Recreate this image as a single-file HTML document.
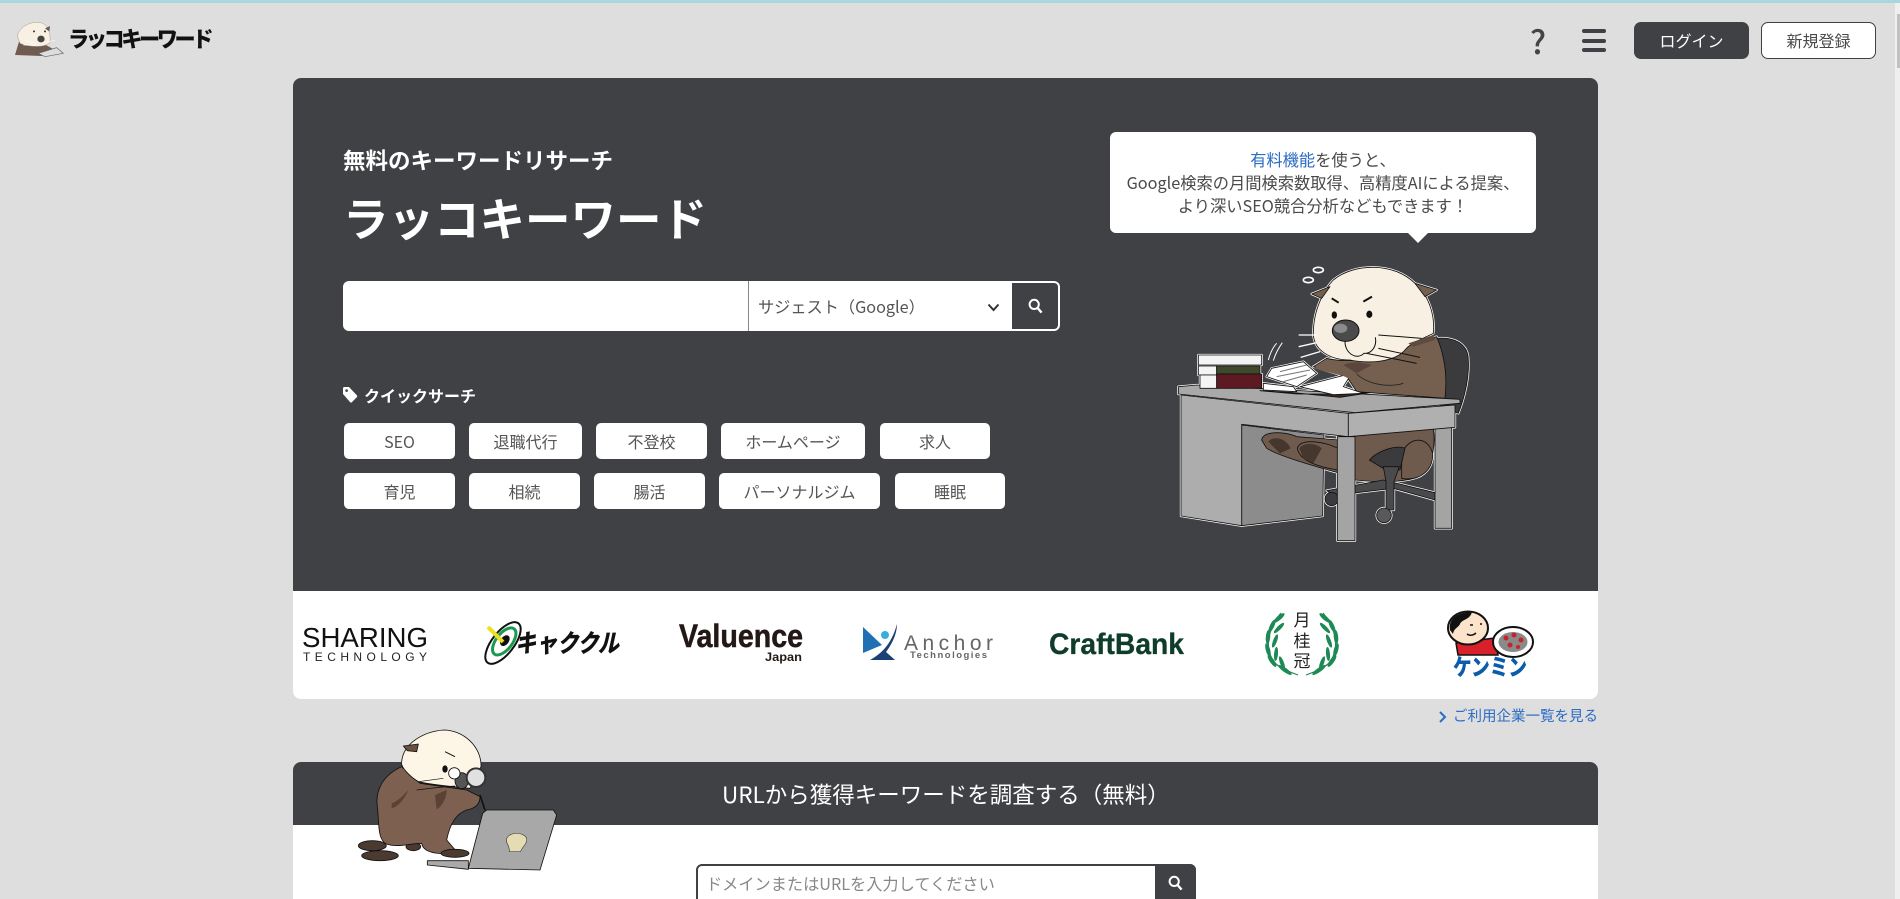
<!DOCTYPE html>
<html lang="ja"><head><meta charset="utf-8"><title>ラッコキーワード</title>
<style>
html,body{margin:0;padding:0;width:1900px;height:899px;overflow:hidden;background:#dedede}
body{position:relative;font-family:"Noto Sans CJK JP","Liberation Sans",sans-serif;color:#4a4a4a}
.a{position:absolute;box-sizing:border-box}
.c{display:flex;align-items:center;justify-content:center;white-space:nowrap}
.n{white-space:nowrap;line-height:1}
.chip{background:#fff;border-radius:5px;height:36px;font-size:16px;color:#555}
svg{position:absolute;overflow:visible}
</style></head><body>
<div class="a" style="left:0;top:0;width:1900px;height:3px;background:#a6d8dd"></div>
<div class="a" style="left:1895px;top:3px;width:5px;height:896px;background:#efefef"></div>
<div class="a" style="left:1897px;top:14px;width:3px;height:54px;background:#c1c1c1"></div>

<!-- header logo -->
<svg style="left:0;top:0" width="300" height="80" viewBox="0 0 900 240">
<path d="M58 122L45 165L125 168L165 150L110 120Z" fill="#6f5b4f"/>
<path d="M52 108C56 85 85 65 115 67C145 70 152 95 150 128C130 145 85 140 60 130Z" fill="#f8f0e3" stroke="#a89a8a" stroke-width="1.5"/>
<path d="M135 85L150 78L148 95Z" fill="#6f5b4f"/>
<ellipse cx="123" cy="117" rx="11" ry="10" fill="#444"/>
<circle cx="102" cy="94" r="3" fill="#333"/><circle cx="135" cy="94" r="3" fill="#333"/>
<path d="M75 122L110 130M140 125L165 122M70 135L105 135" stroke="#fff" stroke-width="2"/>
<path d="M115 160L170 143L190 160L135 170Z" fill="#ddd" stroke="#666" stroke-width="2"/>
</svg>
<div class="a n" style="left:68px;top:27px;font-size:22px;font-weight:900;color:#111;letter-spacing:-3.5px;transform:scaleX(.96);transform-origin:left">ラッコキーワード</div>

<!-- header right -->
<div class="a c" style="left:1526px;top:22px;width:24px;height:36px;font-size:33px;font-weight:500;color:#444">?</div>
<div class="a" style="left:1582px;top:29px;width:24px;height:4px;background:#404145;border-radius:2px"></div>
<div class="a" style="left:1582px;top:39px;width:24px;height:4px;background:#404145;border-radius:2px"></div>
<div class="a" style="left:1582px;top:48px;width:24px;height:4px;background:#404145;border-radius:2px"></div>
<div class="a c" style="left:1634px;top:22px;width:115px;height:37px;padding-bottom:1px;background:#404145;border-radius:7px;color:#fff;font-size:16px">ログイン</div>
<div class="a c" style="left:1761px;top:22px;width:115px;height:37px;padding-bottom:1px;background:#fff;border:1px solid #404145;border-radius:7px;color:#4a4a4a;font-size:16px">新規登録</div>

<!-- hero -->
<div class="a" style="left:293px;top:78px;width:1305px;height:621px;background:#fff;border-radius:8px;overflow:hidden">
<div style="height:513px;background:#404145"></div></div>
<div class="a n" style="left:343px;top:149px;font-size:22.5px;font-weight:700;color:#fff">無料のキーワードリサーチ</div>
<div class="a n" style="left:343px;top:195px;font-size:45.5px;font-weight:700;color:#fff">ラッコキーワード</div>

<div class="a" style="left:343px;top:281px;width:717px;height:50px;background:#fff;border-radius:6px"></div>
<div class="a" style="left:748px;top:281px;width:1px;height:50px;background:#888"></div>
<div class="a n" style="left:758px;top:298px;font-size:16.2px;color:#555">サジェスト（Google）</div>
<svg style="left:987px;top:303px" width="13" height="9" viewBox="0 0 13 9"><path d="M1.5 1.5L6.5 7L11.5 1.5" fill="none" stroke="#333" stroke-width="2"/></svg>
<div class="a" style="left:1012px;top:283px;width:46px;height:46px;background:#404145;border-radius:0 4px 4px 0"></div>
<svg style="left:1028px;top:298px" width="15" height="16" viewBox="0 0 15 16"><circle cx="6.2" cy="6.4" r="4.6" fill="none" stroke="#fff" stroke-width="2"/><path d="M9.6 10L13.6 14.6" stroke="#fff" stroke-width="2.4"/></svg>

<svg style="left:343px;top:387px" width="15" height="16" viewBox="0 0 15 16"><path d="M0 1.5Q0 0 1.5 0H6L14 8.5Q14.6 9.2 14 10L8.8 15.2Q8 16 7.2 15.2L0 7Z" fill="#fff"/><circle cx="3.6" cy="3.6" r="1.3" fill="#404145"/></svg>
<div class="a n" style="left:364px;top:387px;font-size:16px;font-weight:700;color:#fff">クイックサーチ</div>

<div class="a c chip" style="left:344px;top:423px;width:111px">SEO</div>
<div class="a c chip" style="left:469px;top:423px;width:113px">退職代行</div>
<div class="a c chip" style="left:596px;top:423px;width:111px">不登校</div>
<div class="a c chip" style="left:721px;top:423px;width:144px">ホームページ</div>
<div class="a c chip" style="left:880px;top:423px;width:110px">求人</div>
<div class="a c chip" style="left:344px;top:473px;width:111px">育児</div>
<div class="a c chip" style="left:469px;top:473px;width:111px">相続</div>
<div class="a c chip" style="left:594px;top:473px;width:111px">腸活</div>
<div class="a c chip" style="left:719px;top:473px;width:161px">パーソナルジム</div>
<div class="a c chip" style="left:895px;top:473px;width:110px">睡眠</div>

<!-- bubble -->
<div class="a" style="left:1110px;top:132px;width:426px;height:101px;background:#fff;border-radius:6px;text-align:center;font-size:16.25px;line-height:23px;padding-top:16px;color:#4a4a4a;white-space:nowrap"><span style="color:#2b6cc4">有料機能</span>を使うと、<br>Google検索の月間検索数取得、高精度AIによる提案、<br>より深いSEO競合分析などもできます！</div>
<div class="a" style="left:1408px;top:233px;width:0;height:0;border-left:10px solid transparent;border-right:10px solid transparent;border-top:10px solid #fff"></div>

<!-- desk otter -->
<svg style="left:1100px;top:120px" width="460" height="440" viewBox="0 0 1380 1320">
<defs>
<g id="art">
<path d="M1010 655C1060 650 1105 670 1105 720C1108 770 1095 830 1075 880L1020 860Z" fill="#3b3b3d"/>
<path d="M715 950L1000 925C1010 1000 985 1070 930 1078C870 1090 820 1085 765 1080L715 1050Z" fill="#6f5a4e"/>
<path d="M905 1000C930 945 985 950 998 1000C1000 1050 960 1085 905 1075Z" fill="#6f5a4e"/>
<path d="M808 1020C840 985 900 975 915 985L900 1050L850 1045Z" fill="#3b3b3d"/>
<path d="M680 1112L850 1080L1005 1118V1140L880 1105L770 1118L710 1130Z" fill="#4a4a4c"/>
<circle cx="695" cy="1137" r="20" fill="#3b3b3d"/>
<path d="M850 1040H898L882 1085V1170H858V1085Z" fill="#4a4a4c"/>
<circle cx="852" cy="1186" r="22" fill="#59595b"/>
<path d="M1005 925L1055 920V1225H1005Z" fill="#a4a4a4"/>
<path d="M425 915L672 945L668 1188L425 1217Z" fill="#8c8c8c"/>
<path d="M485 960C490 930 560 935 590 950L720 960V1060C650 1040 540 1010 500 985Z" fill="#6f5a4e"/>
<path d="M592 985C600 955 660 965 690 975L715 985V1050C680 1045 600 1030 592 985Z" fill="#6f5a4e"/>
<path d="M243 825L745 880V950L425 913V1217L243 1188Z" fill="#adadad"/>
<path d="M745 880L1065 855V922L745 950Z" fill="#b0b0b0"/>
<path d="M712 950H765V1262H712Z" fill="#a4a4a4"/>
<path d="M1010 650C1040 720 1040 790 1035 835L770 815L740 770L640 740L680 715C740 730 850 720 920 670Z" fill="#75604f"/>
<path d="M235 800L290 795L1080 838V850L765 878L235 822Z" fill="#a9a9a9"/>
<path d="M295 705H485V735H295Z" fill="#f4f4f4"/>
<path d="M295 738H350V765H295Z" fill="#f4f4f4"/><path d="M350 738H480V762H350Z" fill="#3f4a2c"/>
<path d="M300 765H350V805H300Z" fill="#f4f4f4"/><path d="M350 762H485V805H350Z" fill="#5e1a22"/>
<path d="M480 812L580 818L720 832L810 818L700 822H590Z" fill="#3a2a24"/>
<path d="M490 790L580 800L590 815L490 810Z" fill="#fff"/>
<path d="M515 745L610 725L650 760L590 800L500 770Z" fill="#fff"/>
<path d="M600 800L755 760L730 800L790 820L700 824Z" fill="#fff"/>
<path d="M640 640C640 560 680 500 700 480C760 430 880 425 945 490C990 530 1005 590 1000 640C960 660 930 670 915 690C880 730 800 730 750 720C690 720 640 690 640 640Z" fill="#f8f0e3"/>
<path d="M690 500L635 522L665 535Z" fill="#75604f"/>
<path d="M945 490L1010 510L975 530Z" fill="#75604f"/>
</g>
</defs>
<use href="#art" stroke="#fff" stroke-width="7" stroke-linejoin="round"/>
<use href="#art" stroke="#111" stroke-width="2.5" stroke-linejoin="round"/>
<path d="M640 745C680 725 740 730 770 762L925 762C900 800 840 820 780 792L730 768Z" fill="#75604f"/>
<path d="M770 762C800 790 860 805 910 790" fill="none" stroke="#222" stroke-width="2.5"/>
<path d="M730 735C760 720 800 730 815 735L770 760Z" fill="#5a463c"/>
<path d="M925 670L1000 645L1005 660L940 680Z" fill="#5f4b3f"/>
<path d="M505 965C520 945 560 955 572 985L540 1000Z" fill="#45362e"/>
<path d="M598 985C612 965 650 970 665 985L640 1030L610 1015Z" fill="#45362e"/>
<ellipse cx="737" cy="632" rx="40" ry="32" fill="#4b4b4b" stroke="#111" stroke-width="3"/>
<ellipse cx="722" cy="625" rx="20" ry="14" fill="#8a8a8a"/>
<ellipse cx="703" cy="585" rx="8" ry="11" fill="#111"/>
<ellipse cx="808" cy="583" rx="9" ry="11" fill="#111"/>
<path d="M695 535L716 548M790 545L816 530" stroke="#111" stroke-width="6"/>
<path d="M735 665C735 700 770 722 792 700C812 702 832 682 826 652" fill="none" stroke="#111" stroke-width="3"/>
<path d="M835 645L965 655M835 685L960 712M800 700L950 730" stroke="#111" stroke-width="3"/>
<path d="M596 645H650M596 680L650 668M602 712L660 695" stroke="#fff" stroke-width="4"/>
<path d="M505 720C510 700 520 680 530 670M520 722C525 705 535 685 547 668" stroke="#fff" stroke-width="3" fill="none"/>
<path d="M540 755L620 735M530 770L630 750M550 785L620 765" stroke="#777" stroke-width="3"/>
<ellipse cx="625" cy="480" rx="15" ry="8" fill="none" stroke="#fff" stroke-width="5"/>
<ellipse cx="655" cy="450" rx="15" ry="8" fill="none" stroke="#fff" stroke-width="5"/>
</svg>

<!-- logos -->
<svg style="left:0;top:0" width="1900" height="899" viewBox="0 0 1900 899">
<text x="302" y="647" font-family="'Liberation Sans',sans-serif" font-size="28" fill="#111" textLength="126" lengthAdjust="spacingAndGlyphs">SHARING</text>
<text x="303" y="661" font-family="'Liberation Sans',sans-serif" font-size="12" fill="#222" textLength="124">TECHNOLOGY</text>
<g transform="rotate(-52 503 643)"><ellipse cx="503" cy="643" rx="25" ry="11" fill="none" stroke="#111" stroke-width="2"/><ellipse cx="505" cy="643" rx="16" ry="8" fill="none" stroke="#1a9a50" stroke-width="3"/><ellipse cx="506" cy="643" rx="6" ry="4" fill="#111"/></g>
<path d="M488 627L503 642" stroke="#e8e020" stroke-width="4"/>
<text transform="translate(515 652) skewX(-12)" font-family="'Noto Sans CJK JP',sans-serif" font-weight="900" font-size="25" fill="#111" textLength="104" lengthAdjust="spacingAndGlyphs">キャククル</text>
<text x="679" y="647" font-family="'Liberation Sans',sans-serif" font-weight="700" font-size="32" fill="#231815" stroke="#231815" stroke-width=".5" textLength="124" lengthAdjust="spacingAndGlyphs">Valuence</text>
<text x="765" y="661" font-family="'Liberation Sans',sans-serif" font-weight="700" font-size="12" fill="#231815" textLength="37" lengthAdjust="spacingAndGlyphs">Japan</text>
<path d="M863 627L882 645L863 653Z" fill="#1f6fb5"/>
<circle cx="885" cy="635" r="4" fill="#38aee0"/>
<path d="M897 624C892 642 884 652 870 660H895L886 652C892 644 897 634 897 624Z" fill="#1c3f75"/>
<text x="904" y="650" font-family="'Liberation Sans',sans-serif" font-size="21" fill="#666" textLength="89">Anchor</text>
<text x="910" y="658" font-family="'Liberation Sans',sans-serif" font-weight="700" font-size="9.5" fill="#666" textLength="77">Technologies</text>
<text x="1049" y="654" font-family="'Liberation Sans',sans-serif" font-weight="700" font-size="30" fill="#0f3d2a" stroke="#0f3d2a" stroke-width=".3" textLength="135" lengthAdjust="spacingAndGlyphs">CraftBank</text>
<!-- laurel -->
<g id="lau" fill="#1d8a55">
<path d="M1281 613C1268 628 1263 650 1276 664C1282 669 1290 672 1298 675" fill="none" stroke="#1d8a55" stroke-width="1.2"/>
<ellipse cx="1279" cy="618" rx="7" ry="2.2" transform="rotate(-40 1279 618)"/>
<ellipse cx="1272" cy="626" rx="7" ry="2.2" transform="rotate(-65 1272 626)"/>
<ellipse cx="1279" cy="628" rx="7" ry="2" transform="rotate(-45 1279 628)"/>
<ellipse cx="1268" cy="637" rx="7" ry="2.2" transform="rotate(-85 1268 637)"/>
<ellipse cx="1275" cy="641" rx="7" ry="2" transform="rotate(-70 1275 641)"/>
<ellipse cx="1268" cy="650" rx="7" ry="2.2" transform="rotate(75 1268 650)"/>
<ellipse cx="1276" cy="654" rx="7" ry="2" transform="rotate(-85 1276 654)"/>
<ellipse cx="1272" cy="661" rx="7" ry="2.2" transform="rotate(55 1272 661)"/>
<ellipse cx="1282" cy="663" rx="7" ry="2" transform="rotate(70 1282 663)"/>
<ellipse cx="1285" cy="670" rx="8" ry="2.2" transform="rotate(35 1285 670)"/>
</g>
<use href="#lau" transform="translate(2604 0) scale(-1 1)"/>
<g font-family="'Noto Sans CJK JP',sans-serif" font-size="17" fill="#222" text-anchor="middle"><text x="1302" y="626">月</text><text x="1302" y="647">桂</text><text x="1302" y="667">冠</text></g>
<!-- kenmin -->
<path d="M1456 643L1495 638L1498 655H1458Z" fill="#d8202a" stroke="#111" stroke-width="1.5"/>
<ellipse cx="1468" cy="628" rx="20" ry="16.5" fill="#fbe3cc" stroke="#111" stroke-width="2"/>
<path d="M1450 630C1448 617 1460 612 1472 612C1470 620 1462 619 1460 624C1458 628 1454 628 1453 634Z" fill="#111"/>
<path d="M1467 634Q1471 637 1476 633M1470 625H1473M1480 624H1482" fill="none" stroke="#111" stroke-width="1.5"/>
<ellipse cx="1513" cy="642" rx="20" ry="15" fill="#fff" stroke="#111" stroke-width="2"/>
<ellipse cx="1513" cy="642" rx="14.5" ry="10" fill="#8a8a8a"/>
<g fill="#c8232c"><circle cx="1506" cy="638" r="2.5"/><circle cx="1514" cy="635" r="2.5"/><circle cx="1521" cy="640" r="2.5"/><circle cx="1510" cy="645" r="2.5"/><circle cx="1518" cy="647" r="2"/></g>
<text x="1453" y="675" font-family="'Noto Sans CJK JP',sans-serif" font-weight="900" font-size="23" fill="#0b5cab" textLength="74" lengthAdjust="spacingAndGlyphs">ケンミン</text>
</svg>

<svg style="left:1438px;top:711px" width="9" height="12" viewBox="0 0 9 12"><path d="M2 1L7 6L2 11" fill="none" stroke="#2b6cc4" stroke-width="2"/></svg>
<div class="a n" style="left:1453px;top:709px;font-size:14.5px;color:#2b6cc4">ご利用企業一覧を見る</div>

<!-- section 2 -->
<div class="a" style="left:293px;top:762px;width:1305px;height:137px;background:#fff;border-radius:8px 8px 0 0;overflow:hidden"><div style="height:63px;background:#404145"></div></div>
<div class="a n" style="left:722px;top:783px;font-size:22.5px;color:#fff">URLから獲得キーワードを調査する（無料）</div>
<div class="a" style="left:696px;top:864px;width:500px;height:42px;background:#fff;border:2px solid #404145;border-radius:6px"></div>
<div class="a" style="left:1155px;top:864px;width:41px;height:42px;background:#404145;border-radius:0 6px 6px 0"></div>
<svg style="left:1168px;top:875px" width="15" height="16" viewBox="0 0 15 16"><circle cx="6.2" cy="6.4" r="4.6" fill="none" stroke="#fff" stroke-width="2"/><path d="M9.6 10L13.6 14.6" stroke="#fff" stroke-width="2.4"/></svg>
<div class="a n" style="left:706px;top:875px;font-size:16.2px;color:#888">ドメインまたはURLを入力してください</div>

<!-- laptop otter -->
<svg style="left:290px;top:710px" width="500" height="189" viewBox="0 0 1500 567">
<g stroke="#111" stroke-width="2.5" stroke-linejoin="round">
<ellipse cx="247" cy="407" rx="42" ry="15" fill="#4a3a30"/>
<ellipse cx="270" cy="437" rx="55" ry="15" fill="#4a3a30"/>
<ellipse cx="370" cy="410" rx="22" ry="12" fill="#4a3a30"/>
<path d="M335 170C280 195 255 240 262 290C268 340 262 380 285 400C320 415 360 400 395 400C400 435 470 435 500 425L470 390C480 340 500 310 530 300C560 295 570 280 570 260L530 240L390 220Z" fill="#7d6050"/>
<ellipse cx="495" cy="430" rx="42" ry="12" fill="#4a3a30"/>
<path d="M335 155C340 100 400 65 460 60C520 60 575 110 573 170L540 235C490 230 430 225 385 215C360 200 330 170 335 155Z" fill="#fdf5e6"/>
<path d="M340 108L385 102L380 125L352 122Z" fill="#6a5240"/>
<path d="M305 280C330 270 345 250 355 240C345 265 325 290 305 295Z" fill="#5a4335" stroke="none"/>
<path d="M435 255L470 240C470 265 455 290 440 298Z" fill="#5a4335" stroke="none"/>
<path d="M570 255L585 300" fill="none" stroke-width="5"/>
<path d="M380 240C420 235 460 230 495 228M385 215L460 205" fill="none" stroke-width="2"/>
<ellipse cx="515" cy="212" rx="20" ry="24" fill="#555"/>
<circle cx="493" cy="190" r="17" fill="#fff"/>
<circle cx="558" cy="203" r="28" fill="#e0e0e0" stroke="#333" stroke-width="6"/>
<path d="M590 300H790L800 315L750 480L535 475L578 310Z" fill="#a8a8a8"/>
<path d="M412 452H535V478L412 465Z" fill="#aaa"/>
</g>
<ellipse cx="465" cy="177" rx="8" ry="11" fill="#111"/>
<path d="M465 125L495 140" stroke="#111" stroke-width="3"/>
<path d="M650 385C660 365 700 365 710 385C712 405 695 410 692 425L658 425C660 405 645 400 650 385Z" fill="#e5dcb4" stroke="#444" stroke-width="2"/>
</svg>
</body></html>
